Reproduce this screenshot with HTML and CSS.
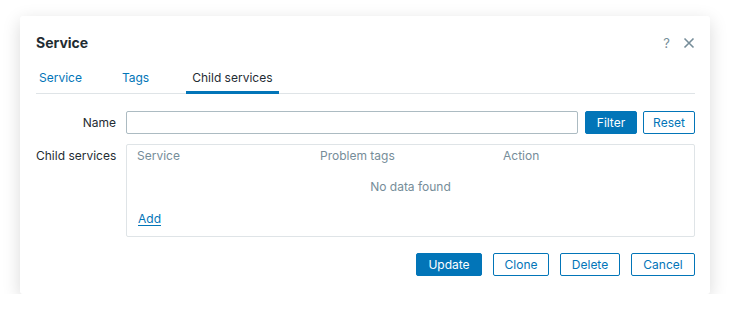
FILE: index.html
```html
<!DOCTYPE html>
<html lang="en">
<head>
    <meta charset="utf-8">
    <title>Service</title>
    <link rel="stylesheet" href="styles.css">
</head>
<body>
<div class="dialog">
    <div class="dialog-head">
        <h4 class="dialog-title">Service</h4>
        <div class="dialog-tools">
            <span class="help">?</span>
            <svg class="close" width="12" height="12" viewBox="0 0 12 12">
                <path d="M1.5 1.5 L10.5 10.5 M10.5 1.5 L1.5 10.5" stroke="#768d99" stroke-width="1.6" fill="none"/>
            </svg>
        </div>
    </div>
    <ul class="tabs">
        <li><a href="#">Service</a></li>
        <li><a href="#">Tags</a></li>
        <li class="active"><a href="#">Child services</a></li>
    </ul>
    <form class="form-grid">
        <label class="form-label">Name</label>
        <div class="filter-row">
            <input type="text" class="text-input">
            <button type="button" class="btn btn-primary">Filter</button>
            <button type="button" class="btn btn-alt">Reset</button>
        </div>
        <label class="form-label">Child services</label>
        <div class="table-box">
            <div class="table-head">
                <span>Service</span>
                <span>Problem tags</span>
                <span>Action</span>
            </div>
            <div class="no-data">No data found</div>
            <div class="add-row"><a href="#" class="link">Add</a></div>
        </div>
    </form>
    <div class="dialog-foot">
        <button type="button" class="btn btn-primary">Update</button>
        <button type="button" class="btn btn-alt">Clone</button>
        <button type="button" class="btn btn-alt">Delete</button>
        <button type="button" class="btn btn-alt">Cancel</button>
    </div>
</div>
</body>
</html>
```

FILE: styles.css
```css
body {
    margin: 0;
    background: #ffffff;
    font-family: Inter, "Noto Sans", Arial, sans-serif;
    font-size: 12px;
    color: #1f2c33;
}

.dialog {
    width: 690px;
    margin: 16px 0 0 20px;
    padding: 0 15px 18px 16px;
    box-sizing: border-box;
    background: #fff;
    border-radius: 3px;
    box-shadow: 0 5px 18px rgba(0, 0, 0, .15);
}

.dialog-head { display: flex; justify-content: space-between; align-items: center; padding-top: 18px; height: 18px; box-sizing: content-box; }
.dialog-title { margin: 0; font-size: 14px; font-weight: 700; line-height: 18px; }
.dialog-tools { display: flex; align-items: center; gap: 13px; }
.help { color: #768d99; font-size: 13px; }
.close { display: block; }

.tabs {
    display: flex;
    margin: 13px 0 0;
    padding: 0;
    list-style: none;
    border-bottom: 1px solid #dfe4e7;
}
.tabs li { margin-bottom: -1px; padding: 0 3px; border-bottom: 3px solid transparent; }
.tabs li + li { margin-left: 34px; }
.tabs li.active { margin-left: 34px; padding: 0 6px; border-bottom-color: #0275b8; }
.tabs a { display: block; padding: 6px 0 6px; line-height: 14px; color: #0275b8; text-decoration: none; }
.tabs li.active a { color: #1f2c33; }

.form-grid {
    display: grid;
    grid-template-columns: 80px 1fr;
    column-gap: 10px;
    row-gap: 10px;
    margin-top: 17px;
}
.form-label { text-align: right; line-height: 23px; white-space: nowrap; }

.filter-row { display: flex; gap: 6px; }
.text-input {
    flex: 1;
    height: 23px;
    margin-right: 1px;
    box-sizing: border-box;
    border: 1px solid #acbbc2;
    border-radius: 2px;
    outline: none;
}
.filter-row .btn { width: 52px; padding: 0; }

.btn {
    height: 23px;
    padding: 0 12px;
    border-radius: 2px;
    font-family: inherit;
    font-size: 12px;
    cursor: pointer;
}
.btn-primary { border: 1px solid #0275b8; background: #0275b8; color: #fff; }
.btn-alt { border: 1px solid #0275b8; background: #fff; color: #0275b8; }

.table-box { border: 1px solid #dfe4e7; border-radius: 2px; padding: 0 10px 5px; }
.table-head { display: grid; grid-template-columns: 183px 183px 1fr; height: 22px; line-height: 22px; color: #768d99; }
.no-data { height: 40px; line-height: 40px; text-align: center; color: #768d99; }
.add-row { height: 24px; line-height: 24px; padding-left: 1px; }
.link { color: #0275b8; text-decoration: underline; text-underline-offset: 2px; }

.dialog-foot { display: flex; justify-content: flex-end; gap: 11px; margin-top: 16px; }
.dialog-foot .btn-primary { width: 66px; }
.dialog-foot .btn-alt:nth-child(2) { width: 56px; }
.dialog-foot .btn-alt:nth-child(3) { width: 60px; }
.dialog-foot .btn-alt:nth-child(4) { width: 64px; }
.dialog-foot .btn { padding: 0; }
```
